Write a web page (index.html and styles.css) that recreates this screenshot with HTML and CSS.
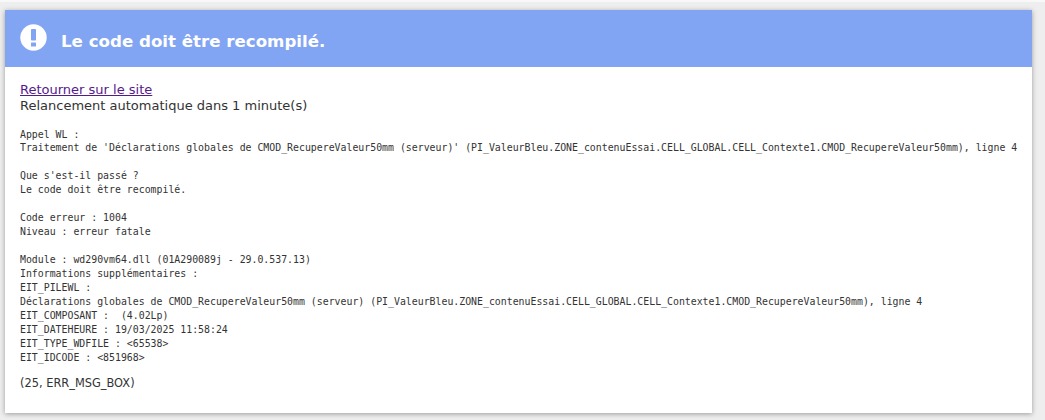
FILE: index.html
```html
<!DOCTYPE html>
<html lang="fr">
<head>
<meta charset="utf-8">
<title>Le code doit être recompilé.</title>
<link rel="stylesheet" href="styles.css">
</head>
<body>
<main class="card">
  <header class="banner">
    <svg class="alert-icon" viewBox="0 0 27 27" width="27" height="27" aria-hidden="true">
      <circle cx="13.5" cy="13.5" r="13.2" fill="#fff"/>
      <rect x="11" y="5" width="5" height="11.5" rx="0.8" fill="#82a5f3"/>
      <rect x="11" y="18.5" width="5" height="4" rx="0.6" fill="#82a5f3"/>
    </svg>
    <h1 class="title">Le code doit être recompilé.</h1>
  </header>
  <section class="content">
    <a class="back" href="#">Retourner sur le site</a>
    <p class="reload">Relancement automatique dans 1 minute(s)</p>
    <pre class="trace">Appel WL :
Traitement de 'Déclarations globales de CMOD_RecupereValeur50mm (serveur)' (PI_ValeurBleu.ZONE_contenuEssai.CELL_GLOBAL.CELL_Contexte1.CMOD_RecupereValeur50mm), ligne 4

Que s'est-il passé ?
Le code doit être recompilé.

Code erreur : 1004
Niveau : erreur fatale

Module : wd290vm64.dll (01A290089j - 29.0.537.13)
Informations supplémentaires :
EIT_PILEWL :
Déclarations globales de CMOD_RecupereValeur50mm (serveur) (PI_ValeurBleu.ZONE_contenuEssai.CELL_GLOBAL.CELL_Contexte1.CMOD_RecupereValeur50mm), ligne 4
EIT_COMPOSANT :  (4.02Lp)
EIT_DATEHEURE : 19/03/2025 11:58:24
EIT_TYPE_WDFILE : &lt;65538&gt;
EIT_IDCODE : &lt;851968&gt;</pre>
    <p class="code">(25, ERR_MSG_BOX)</p>
  </section>
</main>
</body>
</html>
```
FILE: styles.css
```css
html, body {
  margin: 0;
  height: 100%;
  overflow: hidden;
}
body {
  background: #eeeeee;
  border-top: 2px solid #f8f8f8;
  box-sizing: border-box;
  padding: 8px 13px 7px 5px;
  display: flex;
  font-family: "DejaVu Sans", Verdana, sans-serif;
  color: #333;
}
.card {
  flex: 1;
  background: #fff;
  box-shadow: 0 1px 5px rgba(0, 0, 0, 0.35);
  display: flex;
  flex-direction: column;
}
.banner {
  height: 57px;
  box-sizing: border-box;
  background: #82a5f3;
  display: flex;
  align-items: center;
  gap: 14px;
  padding: 0 0 0 15px;
}
.alert-icon {
  flex: none;
  margin-bottom: 2px;
}
.title {
  margin: 5px 0 0;
  font-size: 16.65px;
  font-weight: 700;
  color: #fff;
}
.content {
  padding: 15px 15px 0;
  font-size: 13px;
  line-height: 16px;
}
.back {
  display: block;
  color: #551a8b;
}
.reload {
  margin: 0;
}
.trace {
  margin: 13.5px 0 0;
  font-family: "DejaVu Sans Mono", "Liberation Mono", monospace;
  font-size: 9.87px;
  line-height: 13.95px;
  color: #333;
}
.code {
  margin: 11px 0 0;
  font-size: 11.4px;
  line-height: 14px;
}
```
